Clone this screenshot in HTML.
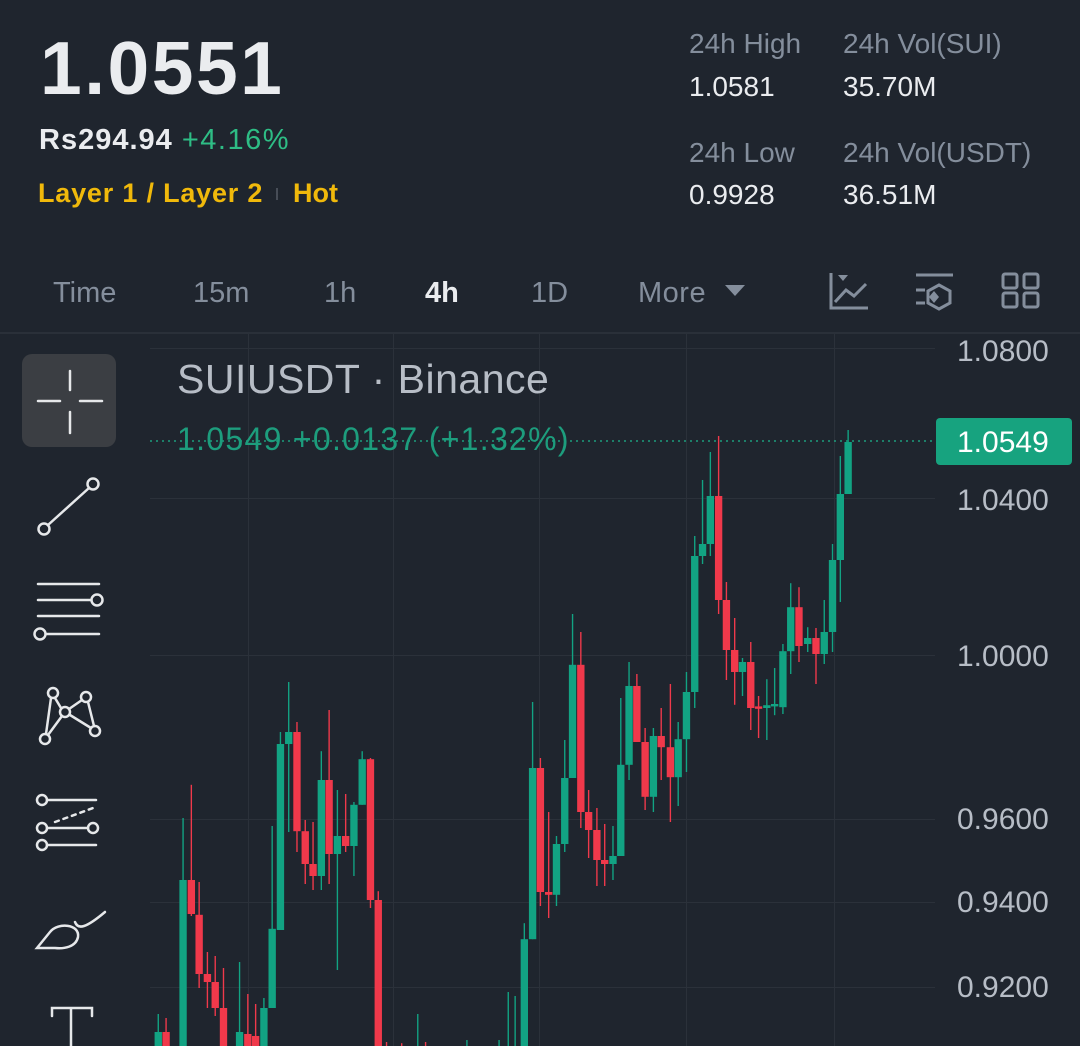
<!DOCTYPE html>
<html><head><meta charset="utf-8"><style>
html,body{margin:0;padding:0;background:#1f252e;width:1080px;height:1046px;overflow:hidden;font-family:"Liberation Sans",sans-serif;}
.t{position:absolute;white-space:nowrap;line-height:1;}
</style></head><body>
<div style="position:absolute;left:0;top:0;width:1080px;height:1046px;background:#1f252e"></div>
<div class="t" style="left:40px;top:31px;font-size:75px;font-weight:bold;color:#eaecef;letter-spacing:2.5px">1.0551</div>
<div class="t" style="left:39px;top:126px;font-size:29px;font-weight:bold;color:#eaecef;letter-spacing:1px">Rs294.94 <span style="color:#2ebd85;font-weight:normal;letter-spacing:1.5px">+4.16%</span></div>
<div class="t" style="left:38px;top:180px;font-size:27px;font-weight:bold;color:#f0b90b;letter-spacing:0.8px">Layer 1 / Layer 2</div>
<div style="position:absolute;left:276px;top:188px;width:2px;height:12px;background:#474d57"></div>
<div class="t" style="left:293px;top:180px;font-size:27px;font-weight:bold;color:#f0b90b">Hot</div>

<div class="t" style="left:689px;top:30px;font-size:28px;color:#848e9c">24h High</div>
<div class="t" style="left:689px;top:73px;font-size:28px;color:#eaecef">1.0581</div>
<div class="t" style="left:843px;top:30px;font-size:28px;color:#848e9c">24h Vol(SUI)</div>
<div class="t" style="left:843px;top:73px;font-size:28px;color:#eaecef">35.70M</div>
<div class="t" style="left:689px;top:139px;font-size:28px;color:#848e9c">24h Low</div>
<div class="t" style="left:689px;top:181px;font-size:28px;color:#eaecef">0.9928</div>
<div class="t" style="left:843px;top:139px;font-size:28px;color:#848e9c">24h Vol(USDT)</div>
<div class="t" style="left:843px;top:181px;font-size:28px;color:#eaecef">36.51M</div>

<div class="t" style="left:53px;top:279px;font-size:29px;color:#848e9c">Time</div>
<div class="t" style="left:193px;top:279px;font-size:29px;color:#848e9c">15m</div>
<div class="t" style="left:324px;top:279px;font-size:29px;color:#848e9c">1h</div>
<div class="t" style="left:425px;top:279px;font-size:29px;color:#eaecef;font-weight:bold">4h</div>
<div class="t" style="left:531px;top:279px;font-size:29px;color:#848e9c">1D</div>
<div class="t" style="left:638px;top:279px;font-size:29px;color:#848e9c;letter-spacing:0.5px">More</div>

<svg style="position:absolute;left:0;top:0" width="1080" height="1046">
<polygon points="725,285 745,285 735,296" fill="#848e9c"/>
<g stroke="#848e9c" stroke-width="3" fill="none">
<path d="M831,273 V308 H868"/><path d="M835,302 L846,290 L854,296 L866,284"/>
<path d="M916,275 H953 M916,290 H925 M916,303 H925"/>
<path d="M939,285 L950,291 V303 L939,309 L928,303 V291 Z"/>
<rect x="1003" y="274" width="14" height="14" rx="2"/><rect x="1024" y="274" width="14" height="14" rx="2"/>
<rect x="1003" y="293" width="14" height="14" rx="2"/><rect x="1024" y="293" width="14" height="14" rx="2"/>
</g>
<polygon points="838,275 848,275 843,281" fill="#848e9c"/>
<polygon points="934,291 939,297 934,303 929,297" fill="#848e9c"/>
<rect x="0" y="332" width="1080" height="2" fill="#2a3039"/>

<g fill="#2b313a">
<rect x="150" y="348" width="785" height="1"/>
<rect x="150" y="498" width="785" height="1"/>
<rect x="150" y="655" width="785" height="1"/>
<rect x="150" y="819" width="785" height="1"/>
<rect x="150" y="902" width="785" height="1"/>
<rect x="150" y="987" width="785" height="1"/>
<rect x="248" y="334" width="1" height="712"/>
<rect x="393" y="334" width="1" height="712"/>
<rect x="539" y="334" width="1" height="712"/>
<rect x="686" y="334" width="1" height="712"/>
<rect x="834" y="334" width="1" height="712"/>
</g>
<line x1="150" y1="441" x2="935" y2="441" stroke="#1d9d7d" stroke-width="1.5" stroke-dasharray="2,4"/>

<g transform="translate(150,420) scale(0.4593,0.4)">
<g fill="#12a383">
<rect x="10" y="1530" width="16" height="70"/><rect x="16.5" y="1485" width="3" height="115"/>
<rect x="64" y="1150" width="16" height="450"/><rect x="70.5" y="995" width="3" height="605"/>
<rect x="187" y="1530" width="16" height="70"/><rect x="193.5" y="1355" width="3" height="245"/>
<rect x="240" y="1470" width="16" height="130"/><rect x="246.5" y="1445" width="3" height="155"/>
<rect x="258" y="1272" width="16" height="198"/><rect x="264.5" y="1015" width="3" height="455"/>
<rect x="276" y="810" width="16" height="465"/><rect x="282.5" y="780" width="3" height="495"/>
<rect x="294" y="780" width="16" height="30"/><rect x="300.5" y="655" width="3" height="375"/>
<rect x="365" y="900" width="16" height="240"/><rect x="371.5" y="828" width="3" height="347"/>
<rect x="400" y="1040" width="16" height="45"/><rect x="406.5" y="925" width="3" height="450"/>
<rect x="436" y="962" width="16" height="103"/><rect x="442.5" y="955" width="3" height="185"/>
<rect x="454" y="848" width="16" height="114"/><rect x="460.5" y="828" width="3" height="134"/>
<rect x="581.5" y="1485" width="3" height="115"/><rect x="688.5" y="1550" width="3" height="50"/>
<rect x="758.5" y="1550" width="3" height="50"/><rect x="778.5" y="1430" width="3" height="170"/>
<rect x="793.5" y="1440" width="3" height="160"/>
<rect x="807" y="1298" width="16" height="302"/><rect x="813.5" y="1258" width="3" height="342"/>
<rect x="825" y="870" width="16" height="428"/><rect x="831.5" y="705" width="3" height="593"/>
<rect x="877" y="1060" width="16" height="127"/><rect x="883.5" y="1040" width="3" height="175"/>
<rect x="895" y="895" width="16" height="165"/><rect x="901.5" y="800" width="3" height="280"/>
<rect x="912" y="612" width="16" height="283"/><rect x="918.5" y="485" width="3" height="410"/>
<rect x="1000" y="1090" width="16" height="20"/><rect x="1006.5" y="1015" width="3" height="135"/>
<rect x="1017" y="862" width="16" height="228"/><rect x="1023.5" y="695" width="3" height="395"/>
<rect x="1035" y="665" width="16" height="197"/><rect x="1041.5" y="605" width="3" height="295"/>
<rect x="1088" y="790" width="16" height="152"/><rect x="1094.5" y="770" width="3" height="210"/>
<rect x="1142" y="798" width="16" height="95"/><rect x="1148.5" y="755" width="3" height="210"/>
<rect x="1160" y="680" width="16" height="118"/><rect x="1166.5" y="630" width="3" height="250"/>
<rect x="1178" y="340" width="16" height="340"/><rect x="1184.5" y="290" width="3" height="430"/>
<rect x="1195" y="310" width="16" height="30"/><rect x="1201.5" y="150" width="3" height="210"/>
<rect x="1212" y="190" width="16" height="120"/><rect x="1218.5" y="80" width="3" height="260"/>
<rect x="1282" y="605" width="16" height="25"/><rect x="1288.5" y="595" width="3" height="95"/>
<rect x="1335" y="713" width="16" height="7"/><rect x="1341.5" y="648" width="3" height="152"/>
<rect x="1352" y="710" width="16" height="6"/><rect x="1358.5" y="620" width="3" height="118"/>
<rect x="1370" y="578" width="16" height="140"/><rect x="1376.5" y="560" width="3" height="175"/>
<rect x="1387" y="468" width="16" height="110"/><rect x="1393.5" y="408" width="3" height="227"/>
<rect x="1424" y="545" width="16" height="15"/><rect x="1430.5" y="518" width="3" height="62"/>
<rect x="1460" y="530" width="16" height="55"/><rect x="1466.5" y="450" width="3" height="160"/>
<rect x="1478" y="350" width="16" height="180"/><rect x="1484.5" y="310" width="3" height="270"/>
<rect x="1495" y="185" width="16" height="165"/><rect x="1501.5" y="90" width="3" height="365"/>
<rect x="1512" y="55" width="16" height="130"/><rect x="1518.5" y="25" width="3" height="160"/>
</g>
<g fill="#f0394b">
<rect x="27" y="1530" width="16" height="70"/><rect x="33.5" y="1495" width="3" height="105"/>
<rect x="82" y="1150" width="16" height="85"/><rect x="88.5" y="912" width="3" height="328"/>
<rect x="99" y="1237" width="16" height="148"/><rect x="105.5" y="1155" width="3" height="265"/>
<rect x="117" y="1385" width="16" height="20"/><rect x="123.5" y="1330" width="3" height="140"/>
<rect x="134" y="1405" width="16" height="65"/><rect x="140.5" y="1340" width="3" height="150"/>
<rect x="152" y="1470" width="16" height="130"/><rect x="158.5" y="1370" width="3" height="230"/>
<rect x="205" y="1535" width="16" height="65"/><rect x="211.5" y="1435" width="3" height="165"/>
<rect x="222" y="1540" width="16" height="60"/><rect x="228.5" y="1460" width="3" height="140"/>
<rect x="312" y="780" width="16" height="248"/><rect x="318.5" y="755" width="3" height="325"/>
<rect x="330" y="1028" width="16" height="82"/><rect x="336.5" y="1000" width="3" height="160"/>
<rect x="347" y="1110" width="16" height="30"/><rect x="353.5" y="1005" width="3" height="170"/>
<rect x="382" y="900" width="16" height="185"/><rect x="388.5" y="725" width="3" height="435"/>
<rect x="418" y="1040" width="16" height="25"/><rect x="424.5" y="935" width="3" height="145"/>
<rect x="472" y="848" width="16" height="352"/><rect x="478.5" y="845" width="3" height="375"/>
<rect x="489" y="1200" width="16" height="400"/><rect x="495.5" y="1178" width="3" height="422"/>
<rect x="513.5" y="1555" width="3" height="45"/><rect x="546.5" y="1558" width="3" height="42"/>
<rect x="598.5" y="1555" width="3" height="45"/>
<rect x="842" y="870" width="16" height="310"/><rect x="848.5" y="845" width="3" height="370"/>
<rect x="860" y="1180" width="16" height="7"/><rect x="866.5" y="980" width="3" height="265"/>
<rect x="930" y="612" width="16" height="368"/><rect x="936.5" y="530" width="3" height="490"/>
<rect x="947" y="980" width="16" height="45"/><rect x="953.5" y="925" width="3" height="170"/>
<rect x="965" y="1025" width="16" height="75"/><rect x="971.5" y="970" width="3" height="195"/>
<rect x="982" y="1100" width="16" height="10"/><rect x="988.5" y="1010" width="3" height="155"/>
<rect x="1052" y="665" width="16" height="140"/><rect x="1058.5" y="635" width="3" height="170"/>
<rect x="1070" y="805" width="16" height="137"/><rect x="1076.5" y="770" width="3" height="205"/>
<rect x="1105" y="790" width="16" height="28"/><rect x="1111.5" y="720" width="3" height="180"/>
<rect x="1125" y="818" width="16" height="75"/><rect x="1131.5" y="660" width="3" height="345"/>
<rect x="1230" y="190" width="16" height="260"/><rect x="1236.5" y="40" width="3" height="445"/>
<rect x="1247" y="450" width="16" height="125"/><rect x="1253.5" y="405" width="3" height="245"/>
<rect x="1265" y="575" width="16" height="55"/><rect x="1271.5" y="495" width="3" height="217"/>
<rect x="1300" y="605" width="16" height="115"/><rect x="1306.5" y="555" width="3" height="220"/>
<rect x="1317" y="716" width="16" height="6"/><rect x="1323.5" y="690" width="3" height="105"/>
<rect x="1405" y="468" width="16" height="97"/><rect x="1411.5" y="418" width="3" height="187"/>
<rect x="1442" y="545" width="16" height="40"/><rect x="1448.5" y="520" width="3" height="140"/>
</g>
</g>

<rect x="22" y="354" width="94" height="93" rx="10" fill="#3b3e43"/>
<g stroke="#e6e8ea" stroke-width="2.5" fill="none" stroke-linecap="round">
<path d="M38,401 H60 M80,401 H102 M70,371 V390 M70,412 V433"/>
<circle cx="44" cy="529" r="5.5"/><circle cx="93" cy="484" r="5.5"/><path d="M48,525 L89,488"/>
<path d="M38,584 H99 M38,600 H91 M38,616 H99 M46,634 H99"/><circle cx="97" cy="600" r="5.5"/><circle cx="40" cy="634" r="5.5"/>
<circle cx="53" cy="693" r="5"/><circle cx="86" cy="697" r="5"/><circle cx="65" cy="712" r="5"/><circle cx="45" cy="739" r="5"/><circle cx="95" cy="731" r="5"/>
<path d="M55,698 L61,708 M69,709 L82,700 M62,716 L48,735 M51,698 L46,734 M70,715 L91,728 M88,702 L94,726"/>
<circle cx="42" cy="800" r="5"/><circle cx="42" cy="828" r="5"/><circle cx="93" cy="828" r="5"/><circle cx="42" cy="845" r="5"/>
<path d="M47,800 H96 M47,828 H88 M47,845 H96"/><path d="M55,822 L93,808" stroke-dasharray="4,5"/>
<path d="M37,948 L50,932 C58,922 80,924 78,937 C76,947 64,949 55,948 Z"/><path d="M75,922 C78,930 86,928 105,912"/>
<path d="M52,1016 V1008 H92 V1016 M71,1008 V1046"/>
</g>

<text x="177" y="393" font-family="Liberation Sans, sans-serif" font-size="41" fill="#b7bdc6" letter-spacing="0.5">SUIUSDT · Binance</text>
<text x="177" y="450" font-family="Liberation Sans, sans-serif" font-size="32" fill="#1d9d7d" letter-spacing="1.3">1.0549  +0.0137 (+1.32%)</text>

<g font-family="Liberation Sans, sans-serif" font-size="30" fill="#b7bdc6">
<text x="957" y="361">1.0800</text>
<text x="957" y="510">1.0400</text>
<text x="957" y="666">1.0000</text>
<text x="957" y="829">0.9600</text>
<text x="957" y="912">0.9400</text>
<text x="957" y="997">0.9200</text>
</g>
<rect x="936" y="418" width="136" height="47" rx="4" fill="#17a37f"/>
<text x="957" y="452" font-family="Liberation Sans, sans-serif" font-size="30" fill="#ffffff">1.0549</text>
</svg>
</body></html>
